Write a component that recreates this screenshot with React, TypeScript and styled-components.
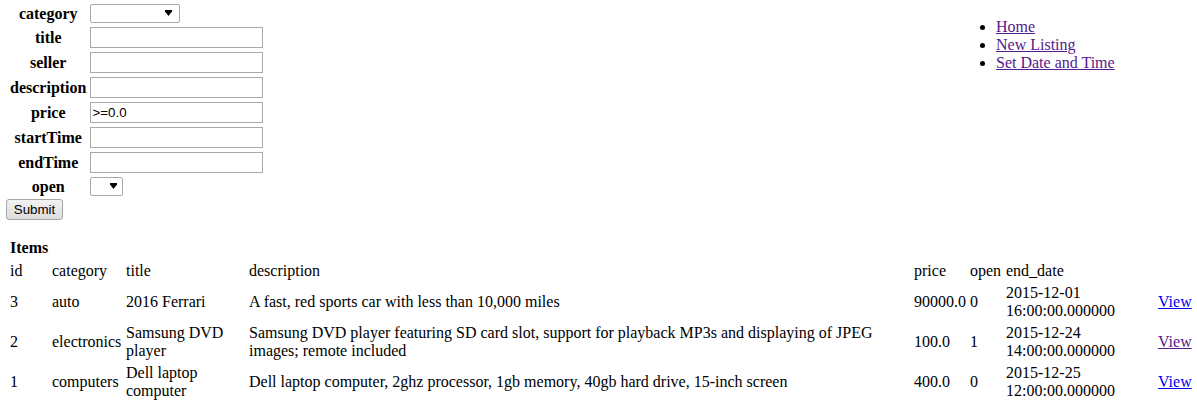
import React from "react";
import styled, { createGlobalStyle } from "styled-components";

const GlobalStyle = createGlobalStyle`
  html, body {
    margin: 0;
    padding: 0;
    background: #ffffff;
  }
  body {
    font-family: "Liberation Serif", "Times New Roman", serif;
    font-size: 16px;
    line-height: 18px;
    color: #000000;
  }
`;

const Page = styled.div`
  padding: 1px 6px 0 6px;
  width: 1197px;
  box-sizing: border-box;
`;

const Top = styled.div`
  display: flex;
  align-items: flex-start;
`;

const SearchForm = styled.form`
  display: flex;
  flex-direction: column;
  align-items: flex-start;
  flex: 1;
`;

const FieldGrid = styled.div`
  display: grid;
  grid-template-columns: max-content max-content;
  column-gap: 2px;
  row-gap: 2px;
  padding: 2px;
  align-items: center;
`;

const Label = styled.label`
  padding: 1px 1px 1px 2px;
  font-weight: bold;
  text-align: center;
`;

const FieldCell = styled.div`
  padding: 1px;
  display: flex;
  align-items: center;
`;

const TextInput = styled.input`
  box-sizing: border-box;
  width: 173px;
  height: 21px;
  margin: 0;
  padding: 0 1px;
  border: 1px solid #a9a9a9;
  font-family: "Liberation Sans", Arial, sans-serif;
  font-size: 13.33px;
  color: #000;
  background: #fff;
  outline: none;
`;

const SelectWrap = styled.span<{ $w: number }>`
  position: relative;
  display: inline-block;
  width: ${(p) => p.$w}px;
  height: 19px;
`;

const Select = styled.select`
  appearance: none;
  -webkit-appearance: none;
  box-sizing: border-box;
  width: 100%;
  height: 19px;
  margin: 0;
  padding: 0 2px;
  border: 1px solid #a9a9a9;
  border-radius: 2px;
  background: #fff;
  font-family: "Liberation Sans", Arial, sans-serif;
  font-size: 13.33px;
  outline: none;
`;

const Arrow = styled.svg<{ $right: number }>`
  position: absolute;
  top: 6px;
  right: ${(p) => p.$right}px;
  width: 7px;
  height: 6px;
  pointer-events: none;
`;

const SubmitButton = styled.button`
  box-sizing: border-box;
  width: 57px;
  height: 21px;
  margin: 0;
  padding: 0;
  border: 1px solid #a6a6a6;
  border-radius: 3px;
  background: linear-gradient(#f2f2f2, #dcdcdc);
  font-family: "Liberation Sans", Arial, sans-serif;
  font-size: 13.33px;
  color: #000;
`;

const Nav = styled.nav`
  width: 235px;
  margin-top: 17px;
`;

const NavList = styled.ul`
  margin: 0;
  padding-left: 40px;
  list-style: disc;
`;

const NavLink = styled.a`
  color: #551a8b;
  text-decoration: underline;
`;

const ItemsSection = styled.section`
  margin-top: 19px;
`;

const ItemsHeading = styled.div`
  font-weight: bold;
  padding-left: 4px;
  margin-bottom: 2px;
`;

const ItemsTable = styled.div`
  display: grid;
  row-gap: 2px;
  padding: 2px 2px 2px 3px;
`;

const Row = styled.div`
  display: grid;
  grid-template-columns: 40px 72px 121px 663px 54px 34px 150px 1fr;
  column-gap: 2px;
  align-items: center;
`;

const Cell = styled.div`
  padding: 1px;
`;

const ViewLink = styled.a<{ $visited?: boolean }>`
  color: ${(p) => (p.$visited ? "#551a8b" : "#0000ee")};
  text-decoration: underline;
`;

const DownArrow = ({ right }: { right: number }) => (
  <Arrow $right={right} viewBox="0 0 7 6">
    <path d="M0 0 H7 V1.5 L3.5 6 L0 1.5 Z" fill="#000" />
  </Arrow>
);

const items = [
  {
    id: 3,
    category: "auto",
    title: "2016 Ferrari",
    description: "A fast, red sports car with less than 10,000 miles",
    price: "90000.0",
    open: "0",
    end: "2015-12-01 16:00:00.000000",
    visited: false,
  },
  {
    id: 2,
    category: "electronics",
    title: "Samsung DVD player",
    description:
      "Samsung DVD player featuring SD card slot, support for playback MP3s and displaying of JPEG images; remote included",
    price: "100.0",
    open: "1",
    end: "2015-12-24 14:00:00.000000",
    visited: true,
  },
  {
    id: 1,
    category: "computers",
    title: "Dell laptop computer",
    description:
      "Dell laptop computer, 2ghz processor, 1gb memory, 40gb hard drive, 15-inch screen",
    price: "400.0",
    open: "0",
    end: "2015-12-25 12:00:00.000000",
    visited: false,
  },
];

const textFields = ["title", "seller", "description", "price", "startTime", "endTime"];

export default function App() {
  return (
    <>
      <GlobalStyle />
      <Page>
        <Top>
          <SearchForm onSubmit={(e) => e.preventDefault()}>
            <FieldGrid>
              <Label>category</Label>
              <FieldCell>
                <SelectWrap $w={90}>
                  <Select defaultValue="">
                    <option value=""></option>
                  </Select>
                  <DownArrow right={8} />
                </SelectWrap>
              </FieldCell>
              {textFields.map((f) => (
                <React.Fragment key={f}>
                  <Label>{f}</Label>
                  <FieldCell>
                    <TextInput
                      type="text"
                      defaultValue={f === "price" ? ">=0.0" : ""}
                    />
                  </FieldCell>
                </React.Fragment>
              ))}
              <Label>open</Label>
              <FieldCell>
                <SelectWrap $w={33}>
                  <Select defaultValue="">
                    <option value=""></option>
                  </Select>
                  <DownArrow right={6} />
                </SelectWrap>
              </FieldCell>
            </FieldGrid>
            <SubmitButton type="submit">Submit</SubmitButton>
          </SearchForm>
          <Nav>
            <NavList>
              <li>
                <NavLink href="#">Home</NavLink>
              </li>
              <li>
                <NavLink href="#">New Listing</NavLink>
              </li>
              <li>
                <NavLink href="#">Set Date and Time</NavLink>
              </li>
            </NavList>
          </Nav>
        </Top>
        <ItemsSection>
          <ItemsHeading>Items</ItemsHeading>
          <ItemsTable>
            <Row>
              <Cell>id</Cell>
              <Cell>category</Cell>
              <Cell>title</Cell>
              <Cell>description</Cell>
              <Cell>price</Cell>
              <Cell>open</Cell>
              <Cell>end_date</Cell>
              <Cell></Cell>
            </Row>
            {items.map((it) => (
              <Row key={it.id}>
                <Cell>{it.id}</Cell>
                <Cell>{it.category}</Cell>
                <Cell>{it.title}</Cell>
                <Cell>{it.description}</Cell>
                <Cell>{it.price}</Cell>
                <Cell>{it.open}</Cell>
                <Cell>{it.end}</Cell>
                <Cell>
                  <ViewLink href="#" $visited={it.visited}>
                    View
                  </ViewLink>
                </Cell>
              </Row>
            ))}
          </ItemsTable>
        </ItemsSection>
      </Page>
    </>
  );
}
